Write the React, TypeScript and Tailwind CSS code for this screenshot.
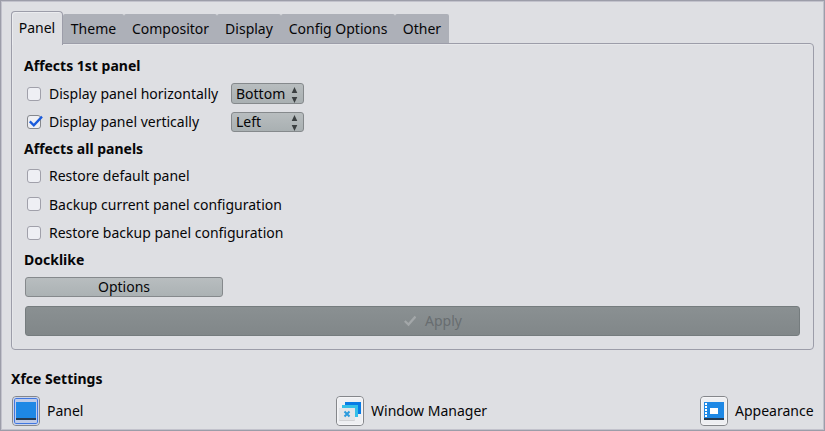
import React from "react";

const TABS = [
  { label: "Theme", cls: "w-[61px]" },
  { label: "Compositor", cls: "w-[93px]" },
  { label: "Display", cls: "w-[64px]" },
  { label: "Config Options", cls: "w-[114px]" },
  { label: "Other", cls: "w-[54px]" },
];

function Heading({ children, className }: { children: React.ReactNode; className: string }) {
  return <h2 className={`h-5 font-bold leading-5 ${className}`}>{children}</h2>;
}

function Checkbox({ checked }: { checked?: boolean }) {
  return (
    <span className={`block h-[14px] w-[14px] shrink-0 rounded-[3px] border bg-[#eeeff4] ${checked ? "border-[#85878c]" : "border-[#a0a0aa]"}`}>
      {checked && (
        <svg width="16" height="14" viewBox="0 0 16 14" className="-mt-px -ml-px overflow-visible">
          <path d="M2.8 6.4 L6.8 10.4 L15 1.6" fill="none" stroke="#1a5bdc" strokeWidth="2.3" />
        </svg>
      )}
    </span>
  );
}

function Option({ label, checked, className, labelClass = "", children }: { label: string; checked?: boolean; className: string; labelClass?: string; children?: React.ReactNode }) {
  return (
    <div className={`flex items-center pl-[15px] ${className}`}>
      <Checkbox checked={checked} />
      <span className={`ml-2 w-[182px] leading-5 whitespace-nowrap ${labelClass}`}>{label}</span>
      {children}
    </div>
  );
}

function Select({ value, className }: { value: string; className: string }) {
  return (
    <div className={`flex w-[73px] items-center justify-between rounded-[3px] border border-[#85898c] bg-linear-to-b from-[#b8bdbf] to-[#a9b0b2] pr-[5px] pl-1 ${className}`}>
      <span className="leading-5">{value}</span>
      <svg width="7" height="16" viewBox="0 0 7 16" fill="#3b3f41" className="mt-[2px]">
        <path d="M3.5 0 L6.3 6 H0.7 Z M3.5 16 L6.3 10 H0.7 Z" />
      </svg>
    </div>
  );
}

function PanelIcon() {
  return (
    <svg width="20" height="20" viewBox="0 0 20 20">
      <rect y="1" width="20" height="18" fill="#1e88e5" />
      <rect y="17" width="20" height="2" fill="#263a50" />
    </svg>
  );
}

function WindowsIcon() {
  return (
    <svg width="22" height="20" viewBox="0 0 22 20">
      <path d="M6 1 H22 V13 H19 V4 H6 Z" fill="#087be5" />
      <path d="M3 4 H19 V16 H16 V7 H3 Z" fill="#35bfe8" />
      <rect x="0" y="7" width="16" height="13" rx="1" fill="#d0d1d4" />
      <rect x="0" y="7" width="16" height="12" rx="1" fill="#e3e5e8" />
      <path d="M5.5 10.5 L10.5 15.5 M10.5 10.5 L5.5 15.5" stroke="#2b9bdd" strokeWidth="2" />
    </svg>
  );
}

function AppearanceIcon() {
  return (
    <svg width="20" height="20" viewBox="0 0 20 20">
      <rect y="1" width="20" height="18" fill="#1e88e5" />
      <rect y="17" width="20" height="2" fill="#263a50" />
      <path d="M1 2h2v2H1z M1 5h2v2H1z M1 8h2v2H1z M1 11h2v2H1z M1 14h2v2H1z M6 7h8v6H6z" fill="#fff" />
    </svg>
  );
}

function Launcher({ label, active, children }: { label: string; active?: boolean; children: React.ReactNode }) {
  return (
    <div className="flex items-center gap-[7px]">
      <span className="block h-[30px] w-7 rounded-[4px] border border-[#85878b]">
        <span
          className={`flex h-full w-full items-center justify-center rounded-[3px] border ${
            active ? "border-[#c9d3ec] bg-[#bfcbe8] shadow-[inset_0_0_0_1px_#4077e0]" : "border-[#f5f5f7] bg-[#eeeff2]"
          }`}
        >
          {children}
        </span>
      </span>
      <span className="leading-5">{label}</span>
    </div>
  );
}

export default function App() {
  return (
    <main className="flex h-[431px] w-[825px] flex-col border border-[#9c9da9] bg-[#dedfe3] pt-[10px] pr-[10px] pl-[10px] font-['Noto_Sans','Open_Sans',sans-serif] text-[14px] text-[#060608] shadow-[inset_0_0_0_1px_#c2c2cc]">
      <nav className="z-10 -mb-[2px] flex h-[34px] shrink-0 items-start">
        <div className="flex h-[34px] w-[52px] justify-center rounded-t-[4px] border border-b-0 border-[#9c9da9] bg-[#dedfe3] pt-[6px] leading-5 shadow-[inset_1px_1px_0_#ebecef]">Panel</div>
        <div className="mt-[3px] flex h-[29px]">
          {TABS.map((tab) => (
            <div key={tab.label} className={`flex justify-center rounded-t-[2px] bg-[#adb0b8] pt-[5px] leading-5 whitespace-nowrap ${tab.cls}`}>
              {tab.label}
            </div>
          ))}
        </div>
      </nav>
      <section className="h-[307px] w-[803px] shrink-0 rounded-[4px] rounded-tl-none border border-[#9c9da9] pt-[12px] pr-[13px] shadow-[inset_1px_1px_0_#e6e7ea]">
        <Heading className="pl-3">Affects 1st panel</Heading>
        <Option label="Display panel horizontally" className="mt-[7px] h-[21px]">
          <Select value="Bottom" className="h-[21px]" />
        </Option>
        <Option label="Display panel vertically" checked className="mt-2 h-5">
          <Select value="Left" className="h-5" />
        </Option>
        <Heading className="mt-[7px] pl-3">Affects all panels</Heading>
        <Option label="Restore default panel" className="mt-[7px] h-5" />
        <Option label="Backup current panel configuration" className="mt-2 h-5" labelClass="pt-[2px]" />
        <Option label="Restore backup panel configuration" className="mt-[9px] h-5" />
        <Heading className="mt-[7px] pl-3">Docklike</Heading>
        <button className="mt-[7px] ml-[13px] flex h-5 w-[198px] items-center justify-center rounded-[3px] border border-[#85898c] bg-linear-to-b from-[#b8bdbf] to-[#abb2b4] leading-5">Options</button>
        <button className="mt-[9px] ml-[13px] flex h-[30px] w-[775px] items-center justify-center gap-[9px] rounded-[3px] border border-[#757c7e] bg-linear-to-b from-[#8a9092] to-[#818789] pl-[41px] leading-5 text-[#686d70]">
          <svg width="12" height="12" viewBox="0 0 12 12">
            <path d="M0.8 6 L4.5 9.6 L11.5 1.5" fill="none" stroke="#a3a7a9" strokeWidth="2.3" />
          </svg>
          Apply
        </button>
      </section>
      <Heading className="mt-[19px]">Xfce Settings</Heading>
      <div className="mt-[7px] flex pl-px">
        <div className="w-[324px]">
          <Launcher label="Panel" active><PanelIcon /></Launcher>
        </div>
        <div className="w-[364px]">
          <Launcher label="Window Manager"><WindowsIcon /></Launcher>
        </div>
        <Launcher label="Appearance"><AppearanceIcon /></Launcher>
      </div>
    </main>
  );
}
